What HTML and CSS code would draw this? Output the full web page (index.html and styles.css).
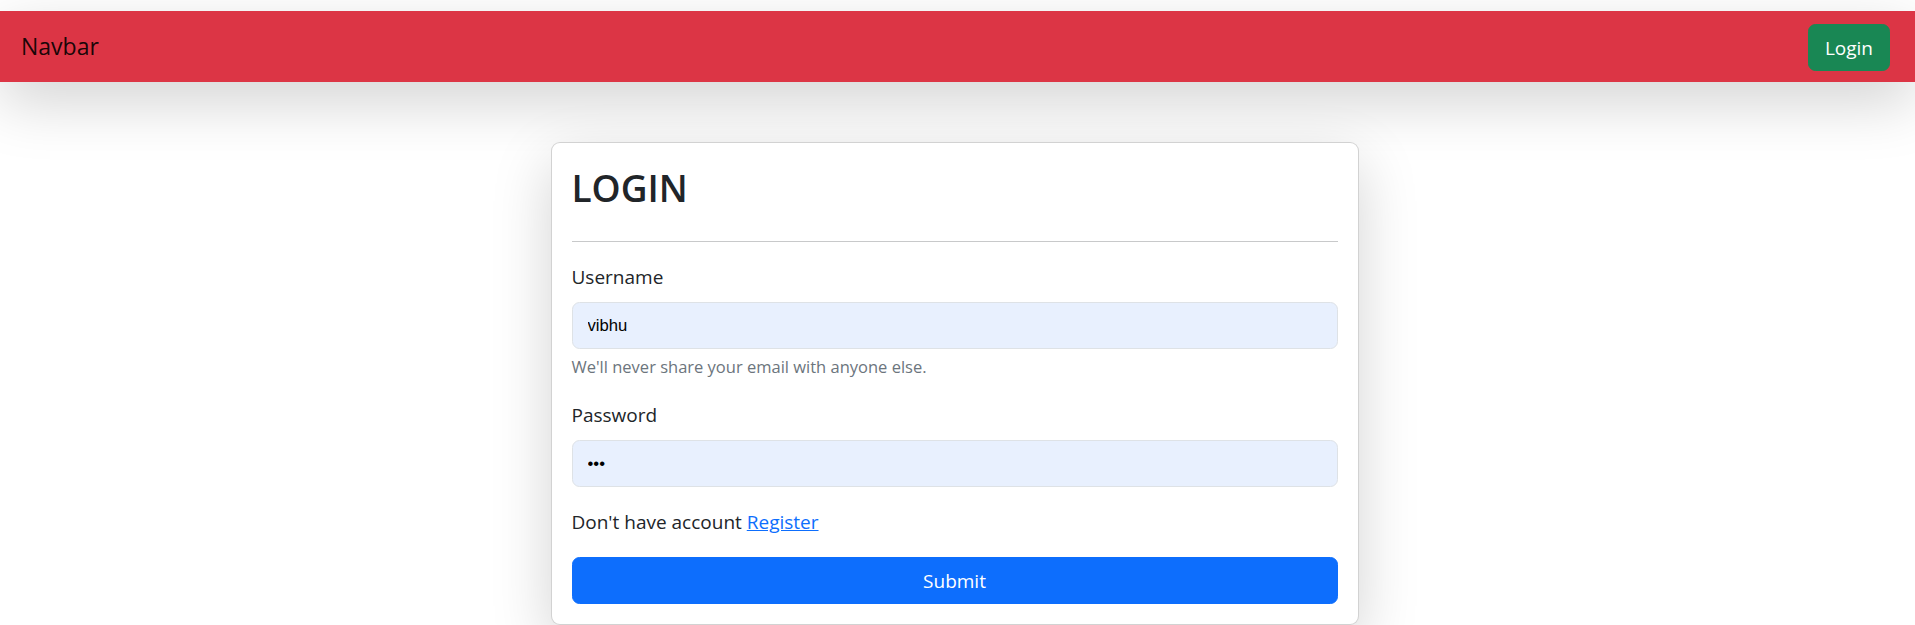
FILE: index.html
```html
<!DOCTYPE html>
<html lang="en">
<head>
<meta charset="utf-8">
<title>Login</title>
<link rel="stylesheet" href="styles.css">
</head>
<body>
<div class="page">
  <nav class="navbar">
    <span class="brand">Navbar</span>
    <button class="btn btn-green" type="button">Login</button>
  </nav>
  <main class="main">
    <div class="card">
      <h2 class="title">LOGIN</h2>
      <hr class="rule">
      <div class="field">
        <label class="label" for="username">Username</label>
        <input class="input" id="username" type="text" value="vibhu">
        <div class="help">We'll never share your email with anyone else.</div>
      </div>
      <div class="field">
        <label class="label" for="password">Password</label>
        <input class="input" id="password" type="password" value="abc">
      </div>
      <p class="account">Don't have account <a class="link" href="#">Register</a></p>
      <button class="btn btn-blue" type="submit">Submit</button>
    </div>
  </main>
</div>
</body>
</html>
```
FILE: styles.css
```css
* { box-sizing: border-box; }
html, body { margin: 0; padding: 0; background: #fff; }
body {
  font-family: "Open Sans", "Noto Sans", sans-serif;
  color: #212529;
  font-size: 20px;
  line-height: 1.5;
}
.page { padding-top: 11px; }
.navbar {
  display: flex;
  align-items: center;
  justify-content: space-between;
  background: #dc3545;
  height: 71px;
  padding: 0 25px 0 21px;
  box-shadow: 0 20px 60px rgba(0,0,0,0.175);
}
.brand {
  font-size: 23px;
  color: rgba(0,0,0,0.9);
  line-height: 1.5;
}
.btn {
  font-family: inherit;
  font-size: 19px;
  line-height: 30px;
  padding: 7.5px 14px;
  border-radius: 7.5px;
  border: 1px solid transparent;
  color: #fff;
  cursor: pointer;
}
.btn-green {
  background: #198754;
  border-color: #198754;
  margin-top: 2px;
  padding: 7.5px 16px;
}
.btn-blue { background: #0d6efd; border-color: #0d6efd; width: 100%; display: block; }
.main {
  display: flex;
  justify-content: center;
  padding: 60px 6px 0 0;
}
.card {
  width: 808px;
  background: #fff;
  border: 1px solid rgba(0,0,0,0.175);
  border-radius: 9px;
  padding: 20px;
  box-shadow: 0 20px 60px rgba(0,0,0,0.175);
}
.title {
  font-size: 37px;
  font-weight: 600;
  line-height: 48px;
  margin: 0;
  padding: 1px 0 10px;
  color: #212529;
}
.rule {
  margin: 19px 0 20px;
  border: 0;
  border-top: 1px solid #c8c9ca;
}
.field { margin-bottom: 20px; }
.label {
  display: block;
  font-size: 19px;
  line-height: 30px;
  margin-bottom: 10px;
}
.input {
  display: block;
  width: 100%;
  height: 47px;
  padding: 7.5px 15px;
  font-family: "Liberation Sans", Arial, sans-serif;
  font-size: 16.7px;
  color: #000;
  background: #e8f0fe;
  border: 1px solid #dee2e6;
  border-radius: 7.5px;
  outline: none;
}
.help {
  margin-top: 5px;
  font-size: 16.5px;
  line-height: 26px;
  color: #6c757d;
}
.account {
  margin: 0 0 20px;
  font-size: 19px;
  line-height: 30px;
}
.link { color: #0d6efd; text-decoration: underline; }
```
